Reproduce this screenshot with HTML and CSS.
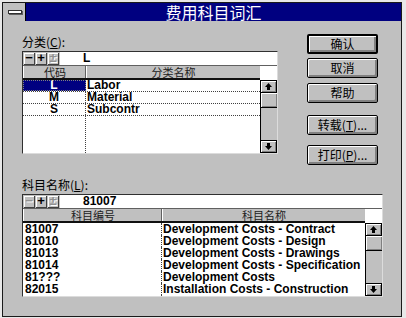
FILE: index.html
```html
<!DOCTYPE html>
<html lang="zh-CN">
<head>
<meta charset="utf-8">
<title>费用科目词汇</title>
<link rel="stylesheet" href="styles.css">
</head>
<body>
<div class="window">
  <div class="titlebar">
    <div class="sysmenu"><span class="sysbar"></span></div>
    <div class="title">费用科目词汇</div>
  </div>
  <div class="content">
    <div class="toprow">
      <div class="group">
        <div class="label">分类(<u>C</u>):</div>
        <div class="listbox lb-top">
          <div class="toolbar">
            <span class="tb">−</span><span class="tb">+</span><span class="tb dis">±</span>
            <div class="edit">L</div>
          </div>
          <div class="listmain">
            <div class="table">
              <div class="hdr"><div class="c1">代码</div><div class="c2">分类名称</div></div>
              <div class="rows lined">
                <div class="row"><div class="c1 center sel">L</div><div class="c2">Labor</div></div>
                <div class="row"><div class="c1 center">M</div><div class="c2">Material</div></div>
                <div class="row"><div class="c1 center">S</div><div class="c2">Subcontr</div></div>
                <div class="row fill"><div class="c1"></div><div class="c2"></div></div>
              </div>
            </div>
            <div class="sbcol">
              <div class="sbspace"></div>
              <div class="scrollbar">
                <div class="sbtn"><svg width="7" height="7" viewBox="0 0 7 7"><path d="M3.5 0L7 4H5V7H2V4H0Z" fill="#000"/></svg></div>
                <div class="thumb"></div>
                <div class="track"></div>
                <div class="sbtn"><svg width="7" height="7" viewBox="0 0 7 7"><path d="M3.5 7L7 3H5V0H2V3H0Z" fill="#000"/></svg></div>
              </div>
            </div>
          </div>
        </div>
      </div>
      <div class="buttons">
        <div class="btn default">确认</div>
        <div class="btn b2">取消</div>
        <div class="btn b3">帮助</div>
        <div class="btn b4">转载(<u>T</u>)...</div>
        <div class="btn b5">打印(<u>P</u>)...</div>
      </div>
    </div>
    <div class="group bottom">
      <div class="label">科目名称(<u>L</u>):</div>
      <div class="listbox lb-bottom">
        <div class="toolbar">
          <span class="tb dis">−</span><span class="tb">+</span><span class="tb dis">±</span>
          <div class="edit">81007</div>
        </div>
        <div class="listmain">
          <div class="table">
            <div class="hdr"><div class="c1">科目编号</div><div class="c2">科目名称</div></div>
            <div class="rows">
              <div class="row"><div class="c1">81007</div><div class="c2">Development Costs - Contract</div></div>
              <div class="row"><div class="c1">81010</div><div class="c2">Development Costs - Design</div></div>
              <div class="row"><div class="c1">81013</div><div class="c2">Development Costs - Drawings</div></div>
              <div class="row"><div class="c1">81014</div><div class="c2">Development Costs - Specification</div></div>
              <div class="row"><div class="c1">81???</div><div class="c2">Development Costs</div></div>
              <div class="row"><div class="c1">82015</div><div class="c2">Installation Costs - Construction</div></div>
              <div class="row fill"><div class="c1"></div><div class="c2"></div></div>
            </div>
          </div>
          <div class="sbcol">
            <div class="sbspace"></div>
            <div class="scrollbar">
              <div class="sbtn"><svg width="7" height="7" viewBox="0 0 7 7"><path d="M3.5 0L7 4H5V7H2V4H0Z" fill="#000"/></svg></div>
              <div class="thumb"></div>
              <div class="track"></div>
              <div class="sbtn"><svg width="7" height="7" viewBox="0 0 7 7"><path d="M3.5 7L7 3H5V0H2V3H0Z" fill="#000"/></svg></div>
            </div>
          </div>
        </div>
      </div>
    </div>
  </div>
</div>
</body>
</html>
```

FILE: styles.css
```css
body {
  margin: 0;
  background: #e8e8e8;
  font-family: "Noto Sans CJK SC", sans-serif;
  color: #000;
}
.window {
  margin: 2px 0 0 2px;
  width: 400px;
  height: 315px;
  box-sizing: border-box;
  border: 1px solid #1a1a1a;
  background: #c0c0c0;
}
.titlebar {
  display: flex;
  height: 18px;
  margin-left: 1px;
  background: #000080;
}
.sysmenu {
  width: 21px;
  background: #c0c0c0;
  border-right: 1px solid #000;
  display: flex;
  align-items: center;
  justify-content: center;
}
.sysbar {
  width: 12px;
  height: 2px;
  background: #fff;
  border: 1px solid #303030;
  box-shadow: 1px 1px 0 #606060;
}
.title {
  flex: 1;
  text-align: center;
  color: #fff;
  font-size: 16px;
  line-height: 18px;
}
.content {
  padding: 13px 0 0 19px;
}
.toprow {
  display: flex;
  align-items: flex-start;
}
.label {
  font-size: 12px;
  line-height: 16px;
  height: 16px;
  margin-bottom: 1px;
}
.label u, .btn u { text-decoration: underline; }
.listbox {
  box-sizing: border-box;
  border-top: 1px solid #303030;
  border-left: 1px solid #303030;
  border-right: 1px solid #dcdcdc;
  border-bottom: 1px solid #dcdcdc;
  background: #fff;
}
.lb-top { width: 256px; }
.lb-bottom { width: 361px; }
.toolbar {
  display: flex;
  height: 13px;
  background: #c0c0c0;
  border-bottom: 1px solid #606060;
}
.tb {
  box-sizing: border-box;
  width: 11px;
  height: 12px;
  margin: 1px 0 0 1px;
  border-right: 1px solid #404040;
  border-bottom: 1px solid #404040;
  box-shadow: inset 1px 1px 0 #fff;
  font: bold 13px/10px "Liberation Sans", sans-serif;
  text-align: center;
}
.tb.dis {
  color: #909090;
  text-shadow: 1px 1px 0 #fff;
}
.edit {
  flex: 1;
  margin-left: 1px;
  background: #fff;
  padding-left: 23px;
  font: bold 12px/13px "Liberation Sans", sans-serif;
}
.listmain {
  display: flex;
}
.table {
  flex: 1;
  display: flex;
  flex-direction: column;
}
.hdr {
  display: flex;
  height: 12px;
  background: #c0c0c0;
  border-bottom: 2px solid #101010;
  font-size: 11px;
  line-height: 12px;
  color: #202020;
}
.hdr .c1, .hdr .c2 {
  text-align: center;
  box-shadow: inset 1px 0 0 #fff;
}
.hdr .c1 { border-right: 1px solid #606060; }
.rows {
  height: 73px;
  display: flex;
  flex-direction: column;
  font: bold 12px/12px "Liberation Sans", sans-serif;
}
.row {
  display: flex;
  height: 12px;
}
.lined .row { border-bottom: 1px dotted #404040; height: 11px; line-height: 11px; }
.lined .row.fill { border-bottom: none; }
.row.fill { flex: 1; }
.c1 {
  box-sizing: border-box;
  border-right: 1px dotted #404040;
  padding-left: 2px;
}
.c2 { flex: 1; padding-left: 1px; white-space: nowrap; }
.lb-top .c1 { width: 63px; }
.lb-bottom .c1 { width: 139px; }
.center { text-align: center; padding-left: 0; }
.sel {
  background: #000080;
  color: #fff;
  outline: 1px dotted #808080;
  outline-offset: -1px;
}
.sbcol {
  width: 17px;
  display: flex;
  flex-direction: column;
}
.sbspace { height: 14px; background: #fff; }
.scrollbar {
  height: 73px;
  box-sizing: border-box;
  border-left: 1px solid #000;
  display: flex;
  flex-direction: column;
  background: #c0c0c0;
}
.sbtn {
  box-sizing: border-box;
  height: 13px;
  border: 1px solid #000;
  border-left: none;
  box-shadow: inset 1px 1px 0 #fff, inset -1px -1px 0 #808080;
  background: #c0c0c0;
  display: flex;
  align-items: center;
  justify-content: center;
}
.thumb {
  box-sizing: border-box;
  height: 15px;
  border-bottom: 1px solid #000;
  box-shadow: inset 1px 1px 0 #fff, inset -1px -1px 0 #808080;
}
.track { flex: 1; background: #c0c0c0; }
.buttons {
  margin-left: 29px;
  width: 71px;
  display: flex;
  flex-direction: column;
}
.btn {
  box-sizing: border-box;
  height: 20px;
  border: 1px solid #000;
  border-radius: 2px;
  background: #c0c0c0;
  box-shadow: inset 1px 1px 0 #fff, inset -2px -2px 0 #808080;
  font-size: 12px;
  line-height: 18px;
  text-align: center;
}
.btn.default { border-width: 2px; line-height: 16px; }
.b2 { margin-top: 4px; }
.b3 { margin-top: 5px; }
.b4 { margin-top: 12px; }
.b5 { margin-top: 10px; }
.bottom { margin-top: 12px; }
```
